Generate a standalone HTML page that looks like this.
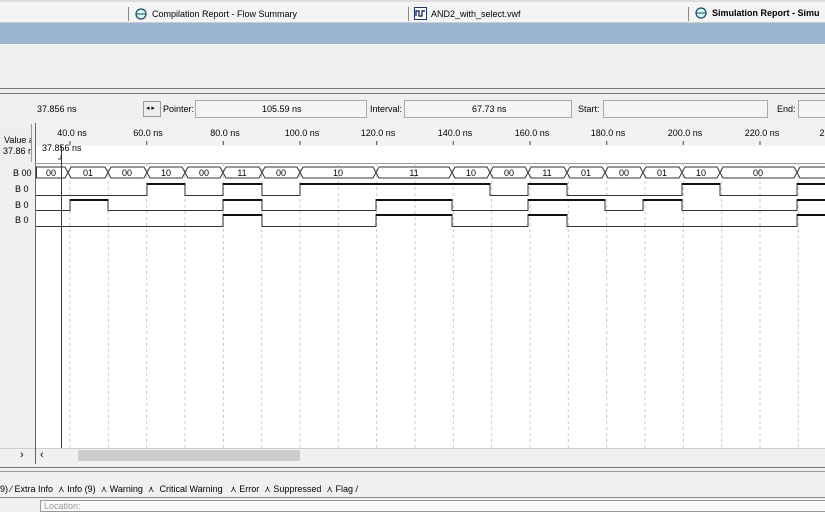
<!DOCTYPE html>
<html><head><style>
body{margin:0;width:825px;height:510px;overflow:hidden;background:#f0f0f0;font-family:"Liberation Sans",sans-serif;font-size:9px;color:#000;position:relative}
.a{position:absolute;white-space:nowrap}
</style></head><body>
<div class="a" style="left:0;top:0;width:825px;height:22px;background:#f4f4f4;border-bottom:1px solid #ccc"></div>
<div class="a" style="left:0;top:0;width:825px;height:2px;background:#ddd"></div>
<div class="a" style="left:128px;top:7px;width:1px;height:14px;background:#888"></div>
<div class="a" style="left:408px;top:7px;width:1px;height:14px;background:#888"></div>
<div class="a" style="left:688px;top:7px;width:1px;height:14px;background:#888"></div>
<svg class="a" style="left:134px;top:7px" width="14" height="13"><circle cx="7" cy="7" r="5" fill="#cfe" stroke="#246" stroke-width="1.2"/><path d="M2 7h10" stroke="#246"/></svg>
<div class="a" style="left:152px;top:9px">Compilation Report - Flow Summary</div>
<svg class="a" style="left:414px;top:7px" width="13" height="13"><rect x="0.5" y="0.5" width="12" height="12" fill="#fff" stroke="#236"/><path d="M2 9V4h3v5h3V4h3" fill="none" stroke="#236" stroke-width="1.4"/></svg>
<div class="a" style="left:431px;top:9px">AND2_with_select.vwf</div>
<svg class="a" style="left:694px;top:6px" width="14" height="13"><circle cx="7" cy="7" r="5" fill="#cfe" stroke="#246" stroke-width="1.2"/><path d="M2 7h10" stroke="#246"/></svg>
<div class="a" style="left:712px;top:8px;font-weight:bold">Simulation Report - Simu</div>
<div class="a" style="left:0;top:23px;width:825px;height:21px;background:#9bb5d1"></div>
<div class="a" style="left:0;top:88px;width:825px;height:1px;background:#777"></div>
<div class="a" style="left:0;top:93px;width:825px;height:1px;background:#777"></div>
<div class="a" style="left:37px;top:104px">37.856 ns</div>
<div class="a" style="left:143px;top:101px;width:16px;height:14px;border:1px solid #999;background:#eee;font-size:7px;line-height:14px">&nbsp;◂&nbsp;▸</div>
<div class="a" style="left:163px;top:104px">Pointer:</div>
<div class="a" style="left:195px;top:100px;width:170px;height:16px;border:1px solid #aaa;background:#f4f4f4"></div>
<div class="a" style="left:262px;top:104px">105.59 ns</div>
<div class="a" style="left:370px;top:104px">Interval:</div>
<div class="a" style="left:404px;top:100px;width:166px;height:16px;border:1px solid #aaa;background:#f4f4f4"></div>
<div class="a" style="left:472px;top:104px">67.73 ns</div>
<div class="a" style="left:578px;top:104px">Start:</div>
<div class="a" style="left:603px;top:100px;width:163px;height:16px;border:1px solid #aaa;background:#f4f4f4"></div>
<div class="a" style="left:777px;top:104px">End:</div>
<div class="a" style="left:798px;top:100px;width:30px;height:16px;border:1px solid #aaa;background:#f4f4f4"></div>
<div class="a" style="left:0;top:124px;width:31px;height:38px;background:#eee;border-right:1px solid #999;overflow:hidden"></div>
<div class="a" style="left:4px;top:135px;width:27px;overflow:hidden">Value a</div>
<div class="a" style="left:3px;top:146px;width:28px;overflow:hidden">37.86 r</div>
<div class="a" style="left:0;top:163px;width:36px;height:285px;background:#f0f0f0"></div>
<div class="a" style="left:13px;top:168px">B 00</div>
<div class="a" style="left:15px;top:184px">B 0</div>
<div class="a" style="left:15px;top:200px">B 0</div>
<div class="a" style="left:15px;top:215px">B 0</div>
<svg class="a" style="left:0;top:0" width="825" height="510">
<rect x="35" y="123" width="790" height="23" fill="#f2f2f2"/>
<rect x="35" y="146" width="790" height="302" fill="#fff"/>
<line x1="35.5" y1="123" x2="35.5" y2="448" stroke="#666"/>
<line x1="35" y1="163.5" x2="825" y2="163.5" stroke="#999"/>
<g stroke="#c8c8c8" stroke-dasharray="3,3">
<path d="M70 163V448M108.3 163V448M146.7 163V448M185 163V448M223.3 163V448M261.7 163V448M300 163V448M338.3 163V448M376.7 163V448M415 163V448M453.3 163V448M491.7 163V448M530 163V448M568.3 163V448M606.7 163V448M645 163V448M683.3 163V448M721.7 163V448M760 163V448M798.3 163V448"/>
</g>
<g stroke="#444"><path d="M70 141v4M146.7 141v4M223.3 141v4M300 141v4M376.7 141v4M453.3 141v4M530 141v4M606.7 141v4M683.3 141v4M760 141v4"/></g>
<g font-family="Liberation Sans" font-size="9" text-anchor="middle">
<text x="72" y="136">40.0 ns</text><text x="148" y="136">60.0 ns</text><text x="225" y="136">80.0 ns</text><text x="302" y="136">100.0 ns</text><text x="378" y="136">120.0 ns</text><text x="455" y="136">140.0 ns</text><text x="532" y="136">160.0 ns</text><text x="608" y="136">180.0 ns</text><text x="685" y="136">200.0 ns</text><text x="762" y="136">220.0 ns</text><text x="822" y="136">2</text>
</g>
<text x="42" y="151" font-family="Liberation Sans" font-size="9">37.856 ns</text>
<path d="M58 159h3v-4" stroke="#444" fill="none"/>
<g fill="none" stroke="#333" stroke-width="1">
<path d="M36 167H65L71 178H105L111 167H144L150 178H182L188 167H220L226 178H259L265 167H297L303 178H373L379 167H449L455 178H487L493 167H525L531 178H564L570 167H602L608 178H640L646 167H679L685 178H717L723 167H794L800 178H825"/>
<path d="M36 178H65L71 167H105L111 178H144L150 167H182L188 178H220L226 167H259L265 178H297L303 167H373L379 178H449L455 167H487L493 178H525L531 167H564L570 178H602L608 167H640L646 178H679L685 167H717L723 178H794L800 167H825"/>
<path d="M36.5 167V178"/>
</g>
<g font-family="Liberation Sans" font-size="9" text-anchor="middle">
<text x="51" y="176">00</text><text x="88" y="176">01</text><text x="127" y="176">00</text><text x="166" y="176">10</text><text x="204" y="176">00</text><text x="242" y="176">11</text><text x="281" y="176">00</text><text x="338" y="176">10</text><text x="414" y="176">11</text><text x="471" y="176">10</text><text x="509" y="176">00</text><text x="547" y="176">11</text><text x="586" y="176">01</text><text x="624" y="176">00</text><text x="662" y="176">01</text><text x="701" y="176">10</text><text x="758" y="176">00</text>
</g>
<g fill="none" stroke="#333" stroke-width="1">
<path d="M36 195.5H147V183.5H185V195.5H223V183.5H262V195.5H300V183.5H490V195.5H528V183.5H567V195.5H682V183.5H720V195.5H797V183.5H825"/>
<path d="M36 210.5H70V199.5H108V210.5H223V199.5H262V210.5H376V199.5H452V210.5H528V199.5H605V210.5H643V199.5H682V210.5H797V199.5H825"/>
<path d="M36 226.5H223V214.5H262V226.5H376V214.5H452V226.5H528V214.5H567V226.5H797V214.5H825"/>
</g>
<g fill="none" stroke="#111" stroke-width="2">
<path d="M147 184H185M223 184H262M300 184H490M528 184H567M682 184H720M797 184H825"/>
<path d="M70 200H108M223 200H262M376 200H452M528 200H605M643 200H682M797 200H825"/>
<path d="M223 215H262M376 215H452M528 215H567M797 215H825"/>
</g>
<line x1="61.5" y1="146" x2="61.5" y2="448" stroke="#2233aa"/>
</svg>
<div class="a" style="left:0;top:448px;width:825px;height:15px;background:#f0f0f0;border-top:1px solid #ccc"></div>
<div class="a" style="left:35px;top:448px;width:1px;height:16px;background:#666"></div>
<div class="a" style="left:20px;top:449px;font-size:11px">›</div>
<div class="a" style="left:40px;top:449px;font-size:11px">‹</div>
<div class="a" style="left:78px;top:450px;width:222px;height:11px;background:#cdcdcd"></div>
<div class="a" style="left:0;top:467px;width:825px;height:1px;background:#777"></div>
<div class="a" style="left:0;top:471px;width:825px;height:1px;background:#999"></div>
<div class="a" style="left:0;top:484px">9) ⁄ Extra Info &nbsp;⋏ Info (9) &nbsp;⋏ Warning &nbsp;⋏ &nbsp;Critical Warning &nbsp;&nbsp;⋏ Error &nbsp;⋏ Suppressed &nbsp;⋏ Flag /</div>
<div class="a" style="left:0;top:497px;width:825px;height:1px;background:#888"></div>
<div class="a" style="left:40px;top:500px;width:785px;height:10px;border:1px solid #999;border-right:none;background:#fafafa;color:#999;font-size:9px;padding-left:3px">Location:</div>
</body></html>
